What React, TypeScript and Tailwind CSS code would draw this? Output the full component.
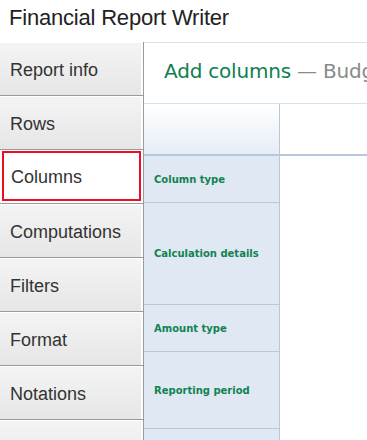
import React from 'react';

const tabs = ['Report info', 'Rows', 'Columns', 'Computations', 'Filters', 'Format', 'Notations', ''];

const rows = [
  { label: 'Column type', h: 'h-[47px]' },
  { label: 'Calculation details', h: 'h-[102px]' },
  { label: 'Amount type', h: 'h-[47px]' },
  { label: 'Reporting period', h: 'h-[77px]' },
  { label: '', h: 'h-[60px]' },
];

const App: React.FC = () => {
  return (
    <div className="w-[367px] h-[440px] overflow-hidden bg-white font-['Liberation_Sans',Arial,sans-serif]">
      {/* Title */}
      <div className="h-[42px] flex items-center pl-[9px] pb-[7px]">
        <h1 className="text-[22px] text-[#222] tracking-[-0.2px]">Financial Report Writer</h1>
      </div>

      <div className="flex">
        {/* Sidebar */}
        <div className="w-[144px] shrink-0 border-r border-[#9a9a9a]">
          {tabs.map((t, i) =>
            t === 'Columns' ? (
              <div key={i} className="h-[54px] border-b border-[#9a9a9a] pt-[1px] pr-[2px] pl-[2px] pb-[2px]">
                <div className="h-full bg-white border-2 border-[#ec0f24] flex items-center pl-[7px] pt-[3px]">
                  <span className="text-[18px] text-[#333]">{t}</span>
                </div>
              </div>
            ) : (
              <div key={i} className="h-[54px] border-b border-[#9a9a9a] pt-[1px] pr-[2px]">
                <div className="h-[52px] bg-gradient-to-b from-[#f4f4f4] to-[#e6e6e6] flex items-center pl-[10px] pt-[3px]">
                  <span className="text-[18px] text-[#333]">{t}</span>
                </div>
              </div>
            )
          )}
        </div>

        {/* Main */}
        <div className="flex-1 min-w-0 overflow-hidden">
          <div className="h-[62px] border-t border-[#d6e2ec] border-b border-[#b7c8dc] flex items-center pl-[20px] pb-[4px] whitespace-nowrap">
            <span className="text-[20px] text-[#0f8050] font-['DejaVu_Sans',sans-serif] tracking-[-0.2px]">Add columns</span>
            <span className="text-[20px] text-[#8a8a8a] font-['DejaVu_Sans',sans-serif] tracking-[-0.2px]">&nbsp;— Budg</span>
          </div>

          <div className="flex h-[52px] border-b-2 border-[#b7c8dc]">
            <div className="w-[136px] border-r border-[#b7c8dc] bg-gradient-to-b from-white to-[#e6edf6]" />
            <div className="flex-1" />
          </div>

          {rows.map((r, i) => (
            <div key={i} className="flex">
              <div className={`w-[136px] ${r.h} bg-[#dfe8f3] border-r border-[#b7c8dc] ${i < rows.length - 1 ? 'border-b' : ''} border-b-[#b7c8dc] flex items-center pl-[10px]`}>
                <span className="text-[10px] font-bold text-[#128252] font-['DejaVu_Sans',sans-serif]">{r.label}</span>
              </div>
              <div className="flex-1" />
            </div>
          ))}
        </div>
      </div>
    </div>
  );
};

export default App;
